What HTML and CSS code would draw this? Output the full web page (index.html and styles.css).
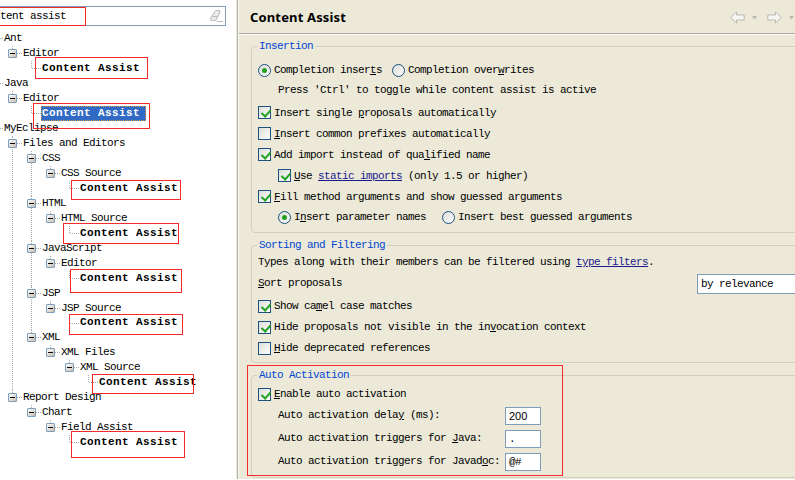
FILE: index.html
```
<!DOCTYPE html>
<html lang="en">
<head>
<meta charset="utf-8">
<title>Preferences</title>
<link rel="stylesheet" href="styles.css">
</head>
<body>
<div class="window">
  <aside class="nav">
    <div class="search">
      <span class="query">Content assist</span>
      <svg class="eraser" width="15" height="14" viewBox="0 0 15 14"><path d="M1.5 9.5 6 2.500Q6.500 1.500 7.500 1.500H10Q11.500 1.500 11 3L7 11Q6.500 11.500 5.500 11.500H3Q1 11.500 1.500 9.500z" fill="#ececec" stroke="#b5b5b5"/><path d="M3.500 7.500h4.500M7.500 12.500H14" fill="none" stroke="#bdbdbd"/></svg>
    </div>
    <ul class="tree">
      <li><div class="row">Ant</div>
        <ul><li><div class="row"><i class="exp"></i>Editor</div>
          <ul><li><div class="row hit">Content Assist</div></li></ul></li></ul></li>
      <li><div class="row">Java</div>
        <ul><li><div class="row"><i class="exp"></i>Editor</div>
          <ul><li><div class="row hit"><span class="selected">Content Assist</span></div></li></ul></li></ul></li>
      <li><div class="row">MyEclipse</div>
        <ul>
          <li><div class="row"><i class="exp"></i>Files and Editors</div>
            <ul>
              <li><div class="row"><i class="exp"></i>CSS</div>
                <ul><li><div class="row"><i class="exp"></i>CSS Source</div>
                  <ul><li><div class="row hit">Content Assist</div></li></ul></li></ul></li>
              <li><div class="row"><i class="exp"></i>HTML</div>
                <ul><li><div class="row"><i class="exp"></i>HTML Source</div>
                  <ul><li><div class="row hit">Content Assist</div></li></ul></li></ul></li>
              <li><div class="row"><i class="exp"></i>JavaScript</div>
                <ul><li><div class="row"><i class="exp"></i>Editor</div>
                  <ul><li><div class="row hit">Content Assist</div></li></ul></li></ul></li>
              <li><div class="row"><i class="exp"></i>JSP</div>
                <ul><li><div class="row"><i class="exp"></i>JSP Source</div>
                  <ul><li><div class="row hit">Content Assist</div></li></ul></li></ul></li>
              <li><div class="row"><i class="exp"></i>XML</div>
                <ul><li><div class="row"><i class="exp"></i>XML Files</div>
                  <ul><li><div class="row"><i class="exp"></i>XML Source</div>
                    <ul><li><div class="row hit">Content Assist</div></li></ul></li></ul></li></ul></li>
            </ul></li>
          <li><div class="row"><i class="exp"></i>Report Design</div>
            <ul><li><div class="row"><i class="exp"></i>Chart</div>
              <ul><li><div class="row"><i class="exp"></i>Field Assist</div>
                <ul><li><div class="row hit">Content Assist</div></li></ul></li></ul></li></ul></li>
        </ul></li>
    </ul>
  </aside>

  <main class="page">
    <header class="head">
      <h1>Content Assist</h1>
      <div class="history">
        <svg width="15" height="13" viewBox="0 0 15 13"><path d="M.8 6.500 6.500.8V4h7.700v5H6.500v3.200z" fill="#f6f6f2" stroke="#b9b9b4" stroke-linejoin="round"/></svg>
        <i class="caret"></i>
        <svg width="15" height="13" viewBox="0 0 15 13"><path d="M14.200 6.500 8.500.8V4H.8v5h7.700v3.200z" fill="#f6f6f2" stroke="#b9b9b4" stroke-linejoin="round"/></svg>
        <i class="caret"></i>
      </div>
    </header>

    <section class="group insertion">
      <h2>Insertion</h2>
      <div class="line short"><i class="radio on"></i><span class="first">Completion inser<u>t</u>s</span><i class="radio"></i><span>Completion over<u>w</u>rites</span></div>
      <div class="line short indent note">Press 'Ctrl' to toggle while content assist is active</div>
      <div class="line"><i class="check on"></i><span>Insert single <u>p</u>roposals automatically</span></div>
      <div class="line"><i class="check"></i><span><u>I</u>nsert common prefixes automatically</span></div>
      <div class="line"><i class="check on"></i><span>Add import instead of qua<u>l</u>ified name</span></div>
      <div class="line indent"><i class="check on"></i><span><u>U</u>se <a>static imports</a> (only 1.5 or higher)</span></div>
      <div class="line"><i class="check on"></i><span><u>F</u>ill method arguments and show guessed arguments</span></div>
      <div class="line indent"><i class="radio on"></i><span class="second">I<u>n</u>sert parameter names</span><i class="radio"></i><span>Insert best guessed arguments</span></div>
    </section>

    <section class="group sorting">
      <h2>Sorting and Filtering</h2>
      <div class="line">Types along with their members can be filtered using&nbsp;<a>type filters</a>.</div>
      <div class="line sort"><span><u>S</u>ort proposals</span><div class="combo">by relevance</div></div>
      <div class="line"><i class="check on"></i><span>Show ca<u>m</u>el case matches</span></div>
      <div class="line"><i class="check on"></i><span>Hide proposals not visible in the in<u>v</u>ocation context</span></div>
      <div class="line"><i class="check"></i><span><u>H</u>ide deprecated references</span></div>
    </section>

    <section class="group activation">
      <h2>Auto Activation</h2>
      <div class="line short"><i class="check on"></i><span><u>E</u>nable auto activation</span></div>
      <div class="line field"><label>Auto activation dela<u>y</u> (ms):</label><div class="input sans">200</div></div>
      <div class="line field"><label>Auto activation triggers for <u>J</u>ava:</label><div class="input">.</div></div>
      <div class="line field"><label>Auto activation triggers for Javad<u>o</u>c:</label><div class="input">@#</div></div>
    </section>
  </main>

  <div class="mark m-search"></div>
  <div class="mark m-ant"></div>
  <div class="mark m-java"></div>
  <div class="mark m-css"></div>
  <div class="mark m-html"></div>
  <div class="mark m-js"></div>
  <div class="mark m-jsp"></div>
  <div class="mark m-xml"></div>
  <div class="mark m-chart"></div>
  <div class="mark m-auto"></div>
</div>
</body>
</html>
```
FILE: styles.css
```
* { box-sizing: border-box; }
body {
  margin: 0;
  background: #fff;
  color: #000;
  font: 11px/15px "Liberation Mono", monospace;
  letter-spacing: -0.6px;
  white-space: nowrap;
}
ul { list-style: none; margin: 0; padding: 0; }
u { text-underline-offset: 1px; }

.window {
  position: relative;
  display: flex;
  width: 795px;
  height: 479px;
  overflow: hidden;
}

/* Navigation tree */
.nav {
  flex: 0 0 238px;
  padding-top: 6px;
  overflow: hidden;
  border-right: 1px solid #b4b4ae;
  box-shadow: inset -1px 0 #ece9d8;
  background: #fff;
}
.search {
  display: flex;
  align-items: center;
  justify-content: space-between;
  width: 226px;
  height: 20px;
  border: 1px solid #7f9db9;
  border-left: 0;
  padding-right: 1px;
}
.query { margin-left: -18px; }
.tree { margin: 5.400px 0 0 -12px; }
.tree ul { margin-left: 19px; }
.tree li { position: relative; }
.tree li::before {
  content: "";
  position: absolute;
  left: 5px;
  top: 0;
  bottom: 0;
  border-left: 1px dotted #aaa;
}
.tree li:last-child::before { bottom: auto; height: 7px; }
.row {
  position: relative;
  display: flex;
  align-items: center;
  height: 14.960px;
  padding-left: 16px;
}
.row::before {
  content: "";
  position: absolute;
  left: 6px;
  top: 7px;
  width: 9px;
  border-top: 1px dotted #aaa;
}
.hit { font-weight: bold; letter-spacing: 0.4px; }
.selected {
  height: 15px;
  width: 105px;
  margin-left: -1px;
  line-height: 13px;
  border: 1px dotted #d99a4a;
  background: #316ac5;
  color: #fff;
}
.exp {
  position: absolute;
  left: 1px;
  top: 3px;
  width: 9px;
  height: 9px;
  border: 1px solid #7b9ebd;
  border-radius: 1px;
  background: linear-gradient(135deg, #fff, #c6bdb0);
}
.exp::after {
  content: "";
  position: absolute;
  left: 1px;
  top: 3px;
  width: 5px;
  height: 1px;
  background: #000;
}

/* Preference page */
.page {
  flex: 1;
  min-width: 0;
  background: #ece9d8;
  border-left: 1px solid #f8f7f0;
}
.head {
  display: flex;
  align-items: center;
  justify-content: space-between;
  height: 35px;
  padding: 0 1px 0 11px;
  border-bottom: 1px solid #fff;
  box-shadow: inset 0 -1px #aca899;
}
h1 {
  margin: 0;
  font: bold 13px/20px "Noto Sans", sans-serif;
  letter-spacing: 0.15px;
}
.history { display: flex; align-items: center; gap: 7px; }
.caret {
  width: 5px;
  border: solid transparent;
  border-width: 3px 2.500px 0;
  border-top-color: #b9b9b4;
}
.history .caret + svg { margin-left: 3px; }
.group {
  position: relative;
  width: 560px;
  margin-left: 12px;
  padding-left: 6px;
  border: 1px solid #d0d0bf;
  border-radius: 4px;
}
.group h2 {
  position: absolute;
  top: -8px;
  left: 5px;
  margin: 0;
  padding: 0 2px;
  background: #ece9d8;
  color: #0046d5;
  font: inherit;
}
.insertion { height: 187px; margin-top: 11px; padding-top: 13px; }
.insertion .check + span { padding-top: 2px; }
.sorting { height: 118px; margin-top: 12px; padding-top: 6px; }
.activation { height: 103px; margin-top: 12px; padding-top: 8px; }
.line { display: flex; align-items: center; height: 21px; }
.short { height: 20px; }
.indent { padding-left: 20px; }
.note { height: 22px; padding-bottom: 2px; }
.first { width: 118px; }
.second { width: 148px; }
a { color: #1a1a8c; text-decoration: underline; text-underline-offset: 1px; }

.check, .radio {
  position: relative;
  flex: none;
  width: 13px;
  height: 13px;
  margin-right: 3px;
  border: 1px solid #1c5180;
  background: linear-gradient(135deg, #dcdcd7, #fff);
}
.radio { border-radius: 50%; }
.check.on::after {
  content: "";
  position: absolute;
  left: 3.500px;
  top: 1px;
  width: 4px;
  height: 7px;
  border: solid #21a121;
  border-width: 0 2px 2px 0;
  transform: rotate(42deg);
}
.radio.on::after {
  content: "";
  position: absolute;
  inset: 3px;
  border-radius: 50%;
  background: #21a121;
}
.sort { height: 23px; padding-bottom: 2px; }
.sort span { flex: none; width: 439px; }
.combo {
  flex: none;
  width: 130px;
  height: 20px;
  padding-left: 3px;
  border: 1px solid #7f9db9;
  background: #fff;
  line-height: 19px;
}
.field { height: 23px; padding-left: 20px; }
.field label { width: 227px; }
.input {
  width: 36px;
  height: 18px;
  padding-left: 3px;
  border: 1px solid #7f9db9;
  background: #fff;
  line-height: 16px;
}
.sans { font-family: "Liberation Sans", sans-serif; letter-spacing: 0; }

/* Highlight frames drawn over the window */
.mark { position: absolute; border: 1px solid #f52a2a; }
.m-search { left: -2px; top: 7px; width: 88px; height: 19px; }
.m-ant { left: 35px; top: 57px; width: 113px; height: 22px; }
.m-java { left: 33px; top: 103px; width: 117px; height: 26px; }
.m-css { left: 71px; top: 180px; width: 110px; height: 20px; }
.m-html { left: 63px; top: 223px; width: 116px; height: 21px; }
.m-js { left: 70px; top: 269px; width: 112px; height: 24px; }
.m-jsp { left: 69px; top: 314px; width: 114px; height: 21px; }
.m-xml { left: 92px; top: 374px; width: 102px; height: 20px; }
.m-chart { left: 71px; top: 431px; width: 114px; height: 27px; }
.m-auto { left: 247px; top: 365px; width: 316px; height: 111px; }
```
